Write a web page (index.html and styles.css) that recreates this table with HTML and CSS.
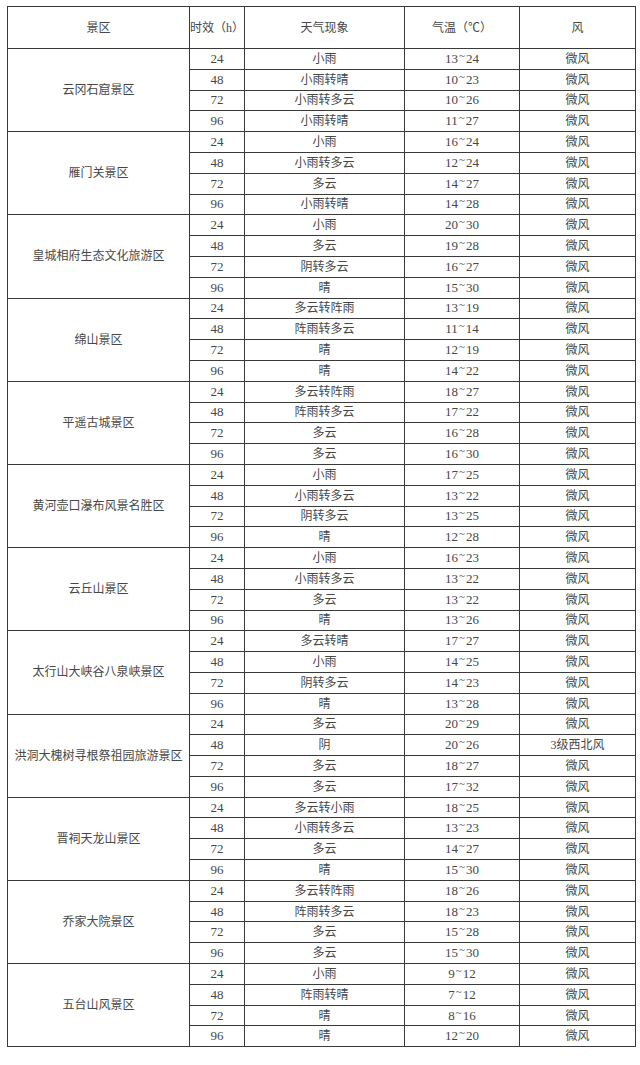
FILE: index.html
```html
<!DOCTYPE html>
<html lang="zh-CN">
<head>
<meta charset="utf-8">
<title>景区天气预报</title>
<link rel="stylesheet" href="styles.css">
</head>
<body>
<table class="wx">
<colgroup>
<col class="c-area"><col class="c-hour"><col class="c-wx"><col class="c-temp"><col class="c-wind">
</colgroup>
<thead>
<tr class="head"><th>景区</th><th>时效（h）</th><th>天气现象</th><th>气温（℃）</th><th>风</th></tr>
</thead>
<tbody>
<tr><td rowspan="4" class="area">云冈石窟景区</td><td class="n">24</td><td>小雨</td><td class="n">13<span class="t">~</span>24</td><td>微风</td></tr>
<tr><td class="n">48</td><td>小雨转晴</td><td class="n">10<span class="t">~</span>23</td><td>微风</td></tr>
<tr><td class="n">72</td><td>小雨转多云</td><td class="n">10<span class="t">~</span>26</td><td>微风</td></tr>
<tr><td class="n">96</td><td>小雨转晴</td><td class="n">11<span class="t">~</span>27</td><td>微风</td></tr>

<tr><td rowspan="4" class="area">雁门关景区</td><td class="n">24</td><td>小雨</td><td class="n">16<span class="t">~</span>24</td><td>微风</td></tr>
<tr><td class="n">48</td><td>小雨转多云</td><td class="n">12<span class="t">~</span>24</td><td>微风</td></tr>
<tr><td class="n">72</td><td>多云</td><td class="n">14<span class="t">~</span>27</td><td>微风</td></tr>
<tr><td class="n">96</td><td>小雨转晴</td><td class="n">14<span class="t">~</span>28</td><td>微风</td></tr>

<tr><td rowspan="4" class="area">皇城相府生态文化旅游区</td><td class="n">24</td><td>小雨</td><td class="n">20<span class="t">~</span>30</td><td>微风</td></tr>
<tr><td class="n">48</td><td>多云</td><td class="n">19<span class="t">~</span>28</td><td>微风</td></tr>
<tr><td class="n">72</td><td>阴转多云</td><td class="n">16<span class="t">~</span>27</td><td>微风</td></tr>
<tr><td class="n">96</td><td>晴</td><td class="n">15<span class="t">~</span>30</td><td>微风</td></tr>

<tr><td rowspan="4" class="area">绵山景区</td><td class="n">24</td><td>多云转阵雨</td><td class="n">13<span class="t">~</span>19</td><td>微风</td></tr>
<tr><td class="n">48</td><td>阵雨转多云</td><td class="n">11<span class="t">~</span>14</td><td>微风</td></tr>
<tr><td class="n">72</td><td>晴</td><td class="n">12<span class="t">~</span>19</td><td>微风</td></tr>
<tr><td class="n">96</td><td>晴</td><td class="n">14<span class="t">~</span>22</td><td>微风</td></tr>

<tr><td rowspan="4" class="area">平遥古城景区</td><td class="n">24</td><td>多云转阵雨</td><td class="n">18<span class="t">~</span>27</td><td>微风</td></tr>
<tr><td class="n">48</td><td>阵雨转多云</td><td class="n">17<span class="t">~</span>22</td><td>微风</td></tr>
<tr><td class="n">72</td><td>多云</td><td class="n">16<span class="t">~</span>28</td><td>微风</td></tr>
<tr><td class="n">96</td><td>多云</td><td class="n">16<span class="t">~</span>30</td><td>微风</td></tr>

<tr><td rowspan="4" class="area">黄河壶口瀑布风景名胜区</td><td class="n">24</td><td>小雨</td><td class="n">17<span class="t">~</span>25</td><td>微风</td></tr>
<tr><td class="n">48</td><td>小雨转多云</td><td class="n">13<span class="t">~</span>22</td><td>微风</td></tr>
<tr><td class="n">72</td><td>阴转多云</td><td class="n">13<span class="t">~</span>25</td><td>微风</td></tr>
<tr><td class="n">96</td><td>晴</td><td class="n">12<span class="t">~</span>28</td><td>微风</td></tr>

<tr><td rowspan="4" class="area">云丘山景区</td><td class="n">24</td><td>小雨</td><td class="n">16<span class="t">~</span>23</td><td>微风</td></tr>
<tr><td class="n">48</td><td>小雨转多云</td><td class="n">13<span class="t">~</span>22</td><td>微风</td></tr>
<tr><td class="n">72</td><td>多云</td><td class="n">13<span class="t">~</span>22</td><td>微风</td></tr>
<tr><td class="n">96</td><td>晴</td><td class="n">13<span class="t">~</span>26</td><td>微风</td></tr>

<tr><td rowspan="4" class="area">太行山大峡谷八泉峡景区</td><td class="n">24</td><td>多云转晴</td><td class="n">17<span class="t">~</span>27</td><td>微风</td></tr>
<tr><td class="n">48</td><td>小雨</td><td class="n">14<span class="t">~</span>25</td><td>微风</td></tr>
<tr><td class="n">72</td><td>阴转多云</td><td class="n">14<span class="t">~</span>23</td><td>微风</td></tr>
<tr><td class="n">96</td><td>晴</td><td class="n">13<span class="t">~</span>28</td><td>微风</td></tr>

<tr><td rowspan="4" class="area">洪洞大槐树寻根祭祖园旅游景区</td><td class="n">24</td><td>多云</td><td class="n">20<span class="t">~</span>29</td><td>微风</td></tr>
<tr><td class="n">48</td><td>阴</td><td class="n">20<span class="t">~</span>26</td><td>3级西北风</td></tr>
<tr><td class="n">72</td><td>多云</td><td class="n">18<span class="t">~</span>27</td><td>微风</td></tr>
<tr><td class="n">96</td><td>多云</td><td class="n">17<span class="t">~</span>32</td><td>微风</td></tr>

<tr><td rowspan="4" class="area">晋祠天龙山景区</td><td class="n">24</td><td>多云转小雨</td><td class="n">18<span class="t">~</span>25</td><td>微风</td></tr>
<tr><td class="n">48</td><td>小雨转多云</td><td class="n">13<span class="t">~</span>23</td><td>微风</td></tr>
<tr><td class="n">72</td><td>多云</td><td class="n">14<span class="t">~</span>27</td><td>微风</td></tr>
<tr><td class="n">96</td><td>晴</td><td class="n">15<span class="t">~</span>30</td><td>微风</td></tr>

<tr><td rowspan="4" class="area">乔家大院景区</td><td class="n">24</td><td>多云转阵雨</td><td class="n">18<span class="t">~</span>26</td><td>微风</td></tr>
<tr><td class="n">48</td><td>阵雨转多云</td><td class="n">18<span class="t">~</span>23</td><td>微风</td></tr>
<tr><td class="n">72</td><td>多云</td><td class="n">15<span class="t">~</span>28</td><td>微风</td></tr>
<tr><td class="n">96</td><td>多云</td><td class="n">15<span class="t">~</span>30</td><td>微风</td></tr>

<tr><td rowspan="4" class="area">五台山风景区</td><td class="n">24</td><td>小雨</td><td class="n">9<span class="t">~</span>12</td><td>微风</td></tr>
<tr><td class="n">48</td><td>阵雨转晴</td><td class="n">7<span class="t">~</span>12</td><td>微风</td></tr>
<tr><td class="n">72</td><td>晴</td><td class="n">8<span class="t">~</span>16</td><td>微风</td></tr>
<tr><td class="n">96</td><td>晴</td><td class="n">12<span class="t">~</span>20</td><td>微风</td></tr>
</tbody>
</table>
</body>
</html>
```

FILE: styles.css
```css
html, body {
  margin: 0;
  padding: 0;
  background: #ffffff;
}

body {
  padding: 6px 0 0 7px;
  font-family: "Liberation Serif", "Noto Sans CJK SC", serif;
  color: #474747;
}

.wx {
  border-collapse: collapse;
  table-layout: fixed;
  width: 628px;
  font-size: 12px;
}

.c-area { width: 182px; }
.c-hour { width: 55px; }
.c-wx { width: 160px; }
.c-temp { width: 115px; }
.c-wind { width: 116px; }

.wx th,
.wx td {
  border: 1px solid #3a3a3a;
  padding: 0;
  text-align: center;
  vertical-align: middle;
  font-weight: normal;
  white-space: nowrap;
  overflow: hidden;
  line-height: 16px;
}

.wx th {
  height: 41px;
}

.wx td {
  height: 19.8px;
}

.wx td.n {
  font-size: 13px;
}

.t {
  display: inline-block;
  vertical-align: 4px;
  line-height: 8px;
  font-size: 11px;
  padding: 0 1px;
}
```
